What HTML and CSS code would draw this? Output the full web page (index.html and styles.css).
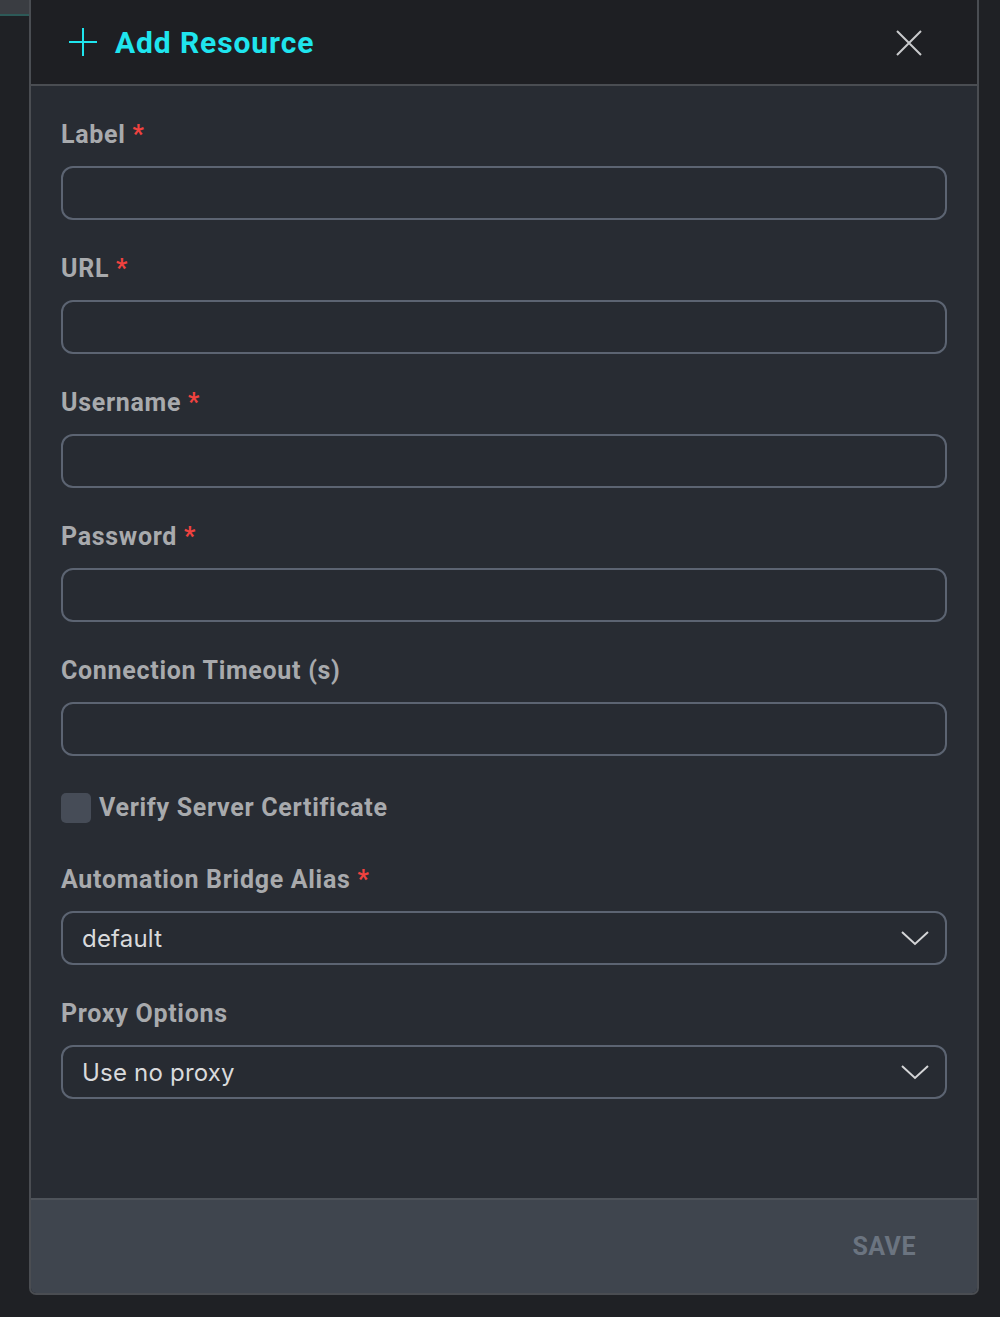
FILE: index.html
```html
<!DOCTYPE html>
<html lang="en">
<head>
<meta charset="utf-8">
<title>Add Resource</title>
<link rel="stylesheet" href="styles.css">
</head>
<body>
<div class="page">
  <div class="side">
    <div class="side-top"></div>
    <div class="side-line"></div>
  </div>
  <div class="modal">
    <header class="modal-head">
      <div class="title">
        <svg class="plus" width="30" height="30" viewBox="0 0 30 30"><path d="M15 1V29M1 15H29" stroke="#1fe5ee" stroke-width="2" fill="none"/></svg>
        <span>Add Resource</span>
      </div>
      <svg class="close" width="26" height="26" viewBox="0 0 26 26"><path d="M1 1L25 25M25 1L1 25" stroke="#c9cacc" stroke-width="2" fill="none"/></svg>
    </header>
    <div class="modal-body">
      <div class="field">
        <label class="label">Label <span class="req">*</span></label>
        <div class="input"></div>
      </div>
      <div class="field">
        <label class="label">URL <span class="req">*</span></label>
        <div class="input"></div>
      </div>
      <div class="field">
        <label class="label">Username <span class="req">*</span></label>
        <div class="input"></div>
      </div>
      <div class="field">
        <label class="label">Password <span class="req">*</span></label>
        <div class="input"></div>
      </div>
      <div class="field">
        <label class="label">Connection Timeout (s)</label>
        <div class="input"></div>
      </div>
      <div class="check-row">
        <span class="checkbox"></span>
        <span class="label">Verify Server Certificate</span>
      </div>
      <div class="field field-select">
        <label class="label">Automation Bridge Alias <span class="req">*</span></label>
        <div class="input select">
          <span class="value">default</span>
          <svg class="chev" width="28" height="15" viewBox="0 0 28 15"><path d="M1 1L14 13L27 1" stroke="#d4d5d7" stroke-width="2" fill="none"/></svg>
        </div>
      </div>
      <div class="field field-proxy">
        <label class="label">Proxy Options</label>
        <div class="input select">
          <span class="value">Use no proxy</span>
          <svg class="chev" width="28" height="15" viewBox="0 0 28 15"><path d="M1 1L14 13L27 1" stroke="#d4d5d7" stroke-width="2" fill="none"/></svg>
        </div>
      </div>
    </div>
    <footer class="modal-foot">
      <span class="save">SAVE</span>
    </footer>
  </div>
</div>
</body>
</html>
```
FILE: styles.css
```css
html, body {
  margin: 0;
  padding: 0;
  background: #1f2125;
}
.page {
  display: flex;
  align-items: flex-start;
  width: 1000px;
  height: 1317px;
  font-family: Roboto, "Liberation Sans", sans-serif;
}
.side {
  width: 29px;
  flex: none;
}
.side-top {
  height: 14px;
  background: #3a3d42;
}
.side-line {
  height: 2px;
  background: #2d5a58;
}
.modal {
  width: 946px;
  border: 2px solid #4a4d52;
  border-top: none;
  border-radius: 0 0 7px 7px;
  overflow: hidden;
  display: flex;
  flex-direction: column;
}
.modal-head {
  height: 84px;
  background: #1e1f23;
  border-bottom: 2px solid #4a4d52;
  display: flex;
  align-items: center;
  justify-content: space-between;
  padding: 0 55px 0 37px;
}
.title {
  display: flex;
  align-items: center;
  gap: 17px;
  color: #1fe5ee;
  font-size: 30px;
  font-weight: 700;
  letter-spacing: 0.9px;
}
.plus { display: block; }
.close { display: block; margin-top: 1px; }
.modal-body {
  height: 1078px;
  background: #282c33;
  padding: 34px 30px 0 30px;
  display: flex;
  flex-direction: column;
}
.field {
  display: flex;
  flex-direction: column;
  gap: 16px;
  margin-bottom: 34px;
}
.label {
  display: block;
  line-height: 30px;
  height: 30px;
  font-size: 25px;
  font-weight: 700;
  letter-spacing: 0.7px;
  color: #a8aaad;
}
.req {
  color: #f0423f;
}
.input {
  height: 50px;
  border: 2px solid #5c6472;
  border-radius: 12px;
  background: #272b32;
}
.check-row {
  display: flex;
  align-items: center;
  gap: 8px;
  margin-top: 3px;
  margin-bottom: 42px;
}
.checkbox {
  width: 30px;
  height: 30px;
  border-radius: 5px;
  background: #464c57;
  flex: none;
}
.field-select { margin-bottom: 34px; }
.select {
  display: flex;
  align-items: center;
  justify-content: space-between;
  padding: 0 16px 0 19px;
}
.value {
  font-family: Inter, "Noto Sans", sans-serif;
  font-size: 24px;
  letter-spacing: 0.2px;
  color: #d9dadc;
}
.chev { display: block; margin-top: 1px; }
.modal-foot {
  height: 93px;
  background: #3f454e;
  border-top: 2px solid #4e535a;
  display: flex;
  align-items: center;
  justify-content: flex-end;
  padding-right: 61px;
}
.save {
  font-size: 25px;
  font-weight: 700;
  letter-spacing: 0.5px;
  color: #6b7480;
}
```
